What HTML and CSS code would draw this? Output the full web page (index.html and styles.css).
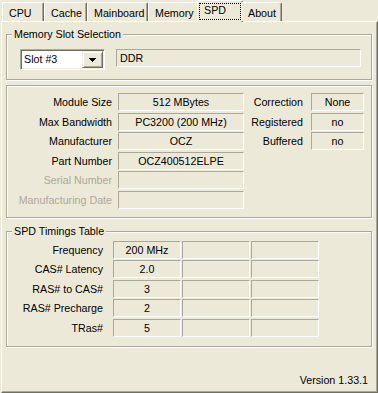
FILE: index.html
```html
<!DOCTYPE html>
<html>
<head>
<meta charset="utf-8">
<link rel="stylesheet" href="styles.css">
</head>
<body>
<div class="window">
  <div class="tabs">
    <div class="tab tab-cpu">CPU</div>
    <div class="tab tab-cache">Cache</div>
    <div class="tab tab-main">Mainboard</div>
    <div class="tab tab-mem">Memory</div>
    <div class="tab tab-spd active"><span class="focus">SPD</span></div>
    <div class="tab tab-about">About</div>
  </div>
  <div class="panel">
    <fieldset class="group group-slot">
      <legend class="group-title">Memory Slot Selection</legend>
      <div class="slot-row">
        <div class="combo">
          <span class="combo-value">Slot #3</span>
          <span class="combo-btn"><svg width="7" height="4" viewBox="0 0 7 4"><path d="M0 0h7v1H0z M1 1h5v1H1z M2 2h3v1H2z M3 3h1v1H3z" fill="#000"/></svg></span>
        </div>
        <div class="field field-type">DDR</div>
      </div>
    </fieldset>
    <fieldset class="group group-module">
      <div class="module">
        <div class="info-grid info-left">
          <span class="label">Module Size</span><span class="field">512 MBytes</span>
          <span class="label">Max Bandwidth</span><span class="field">PC3200 (200 MHz)</span>
          <span class="label">Manufacturer</span><span class="field">OCZ</span>
          <span class="label">Part Number</span><span class="field">OCZ400512ELPE</span>
          <span class="label disabled">Serial Number</span><span class="field"></span>
          <span class="label disabled">Manufacturing Date</span><span class="field"></span>
        </div>
        <div class="info-grid info-right">
          <span class="label">Correction</span><span class="field">None</span>
          <span class="label">Registered</span><span class="field">no</span>
          <span class="label">Buffered</span><span class="field">no</span>
        </div>
      </div>
    </fieldset>
    <fieldset class="group group-timings">
      <legend class="group-title">SPD Timings Table</legend>
      <div class="timings">
        <span class="label">Frequency</span><span class="field">200 MHz</span><span class="field"></span><span class="field"></span>
        <span class="label">CAS# Latency</span><span class="field">2.0</span><span class="field"></span><span class="field"></span>
        <span class="label">RAS# to CAS#</span><span class="field">3</span><span class="field"></span><span class="field"></span>
        <span class="label">RAS# Precharge</span><span class="field">2</span><span class="field"></span><span class="field"></span>
        <span class="label">TRas#</span><span class="field">5</span><span class="field"></span><span class="field"></span>
      </div>
    </fieldset>
    <div class="version">Version 1.33.1</div>
  </div>
</div>
</body>
</html>
```

FILE: styles.css
```css
* { box-sizing: border-box; }

body {
  margin: 0;
  background: #ECE9D8;
  font-family: "Liberation Sans", Arial, sans-serif;
  font-size: 10.7px;
  color: #000;
}

.window {
  width: 378px;
  height: 393px;
  overflow: hidden;
}

/* ---------- tabs ---------- */
.tabs {
  display: flex;
  align-items: flex-end;
  height: 21px;
  padding-left: 2px;
  position: relative;
  z-index: 1;
}

.tab {
  height: 19px;
  padding: 4px 0 0 6px;
  line-height: 13px;
  white-space: nowrap;
  border-top: 1px solid #fff;
  border-left: 1px solid #fff;
  border-right: 1px solid #716F64;
  border-radius: 2px 2px 0 0;
  box-shadow: inset -1px 0 0 #ACA899;
  background: #ECE9D8;
}

.tab-cpu { width: 42px; }
.tab-cache { width: 43px; }
.tab-main { width: 61px; }
.tab-mem { width: 51px; }
.tab-spd { width: 42px; }
.tab-about { width: 41px; }

.tab.active {
  width: 46px;
  height: 22px;
  margin: 0 -2px -1px;
  padding: 2px 1px 0 1px;
}

.focus {
  display: block;
  height: 17px;
  border: 1px dotted #000;
  line-height: 13px;
  padding-left: 4px;
}

/* ---------- panel ---------- */
.panel {
  width: 377px;
  height: 372px;
  margin-left: 1px;
  padding-left: 4px;
  border: 1px solid;
  border-color: #fff #716F64 #716F64 #fff;
  box-shadow: inset -1px -1px 0 #ACA899;
}

.group {
  width: 366px;
  min-width: 0;
  margin: 0;
  padding: 0;
  border: 1px solid #ACA899;
  box-shadow: inset 1px 1px 0 #fff, 1px 1px 0 #fff;
}

.group-title {
  margin-left: 5px;
  padding: 0 2px;
  line-height: 13px;
  background: #ECE9D8;
}

.group-slot { margin-top: 6px; }
.group-module { margin-top: 5px; }
.group-timings { margin-top: 7px; }

/* ---------- fields ---------- */
.field {
  display: block;
  height: 18px;
  line-height: 16px;
  text-align: center;
  white-space: nowrap;
  overflow: hidden;
  border-style: solid;
  border-width: 1px;
  border-color: #ACA899 #fff #fff #ACA899;
}

.label {
  line-height: 18px;
  text-align: right;
  white-space: nowrap;
}

.label.disabled { color: #ACA899; }

/* ---------- slot row ---------- */
.slot-row {
  display: flex;
  align-items: flex-start;
  gap: 11px;
  padding: 8px 0 9px 13px;
}

.combo {
  display: flex;
  width: 85px;
  height: 21px;
  padding: 1px;
  background: #fff;
  border: 1px solid;
  border-color: #ACA899 #fff #fff #ACA899;
  box-shadow: inset 1px 1px 0 #716F64, inset -1px -1px 0 #F1EFE2;
}

.combo-value {
  flex: 1;
  padding-left: 2px;
  line-height: 17px;
}

.combo-btn {
  display: flex;
  align-items: center;
  justify-content: center;
  width: 21px;
  height: 17px;
  background: #ECE9D8;
  border: 1px solid;
  border-color: #F1EFE2 #716F64 #716F64 #F1EFE2;
  box-shadow: inset 1px 1px 0 #fff, inset -1px -1px 0 #ACA899;
}

.combo-btn svg { display: block; }

.field-type {
  width: 245px;
  text-align: left;
  padding-left: 3px;
}

/* ---------- module info ---------- */
.module {
  display: flex;
  align-items: flex-start;
  padding: 7px 0 8px 0;
}

.info-grid {
  display: grid;
  row-gap: 1.5px;
}

.info-left {
  grid-template-columns: 105px 126px;
  column-gap: 6px;
}

.info-right {
  margin-left: 2px;
  grid-template-columns: 57px 53px;
  column-gap: 8px;
}

/* ---------- timings ---------- */
.timings {
  display: grid;
  grid-template-columns: 105px 68px 68px 68px;
  column-gap: 1px;
  row-gap: 1.5px;
  padding: 3px 0 9px 0;
}

.timings .label { padding-right: 9px; }

/* ---------- version ---------- */
.version {
  margin-top: 27px;
  margin-right: 9px;
  line-height: 13px;
  text-align: right;
}
```
